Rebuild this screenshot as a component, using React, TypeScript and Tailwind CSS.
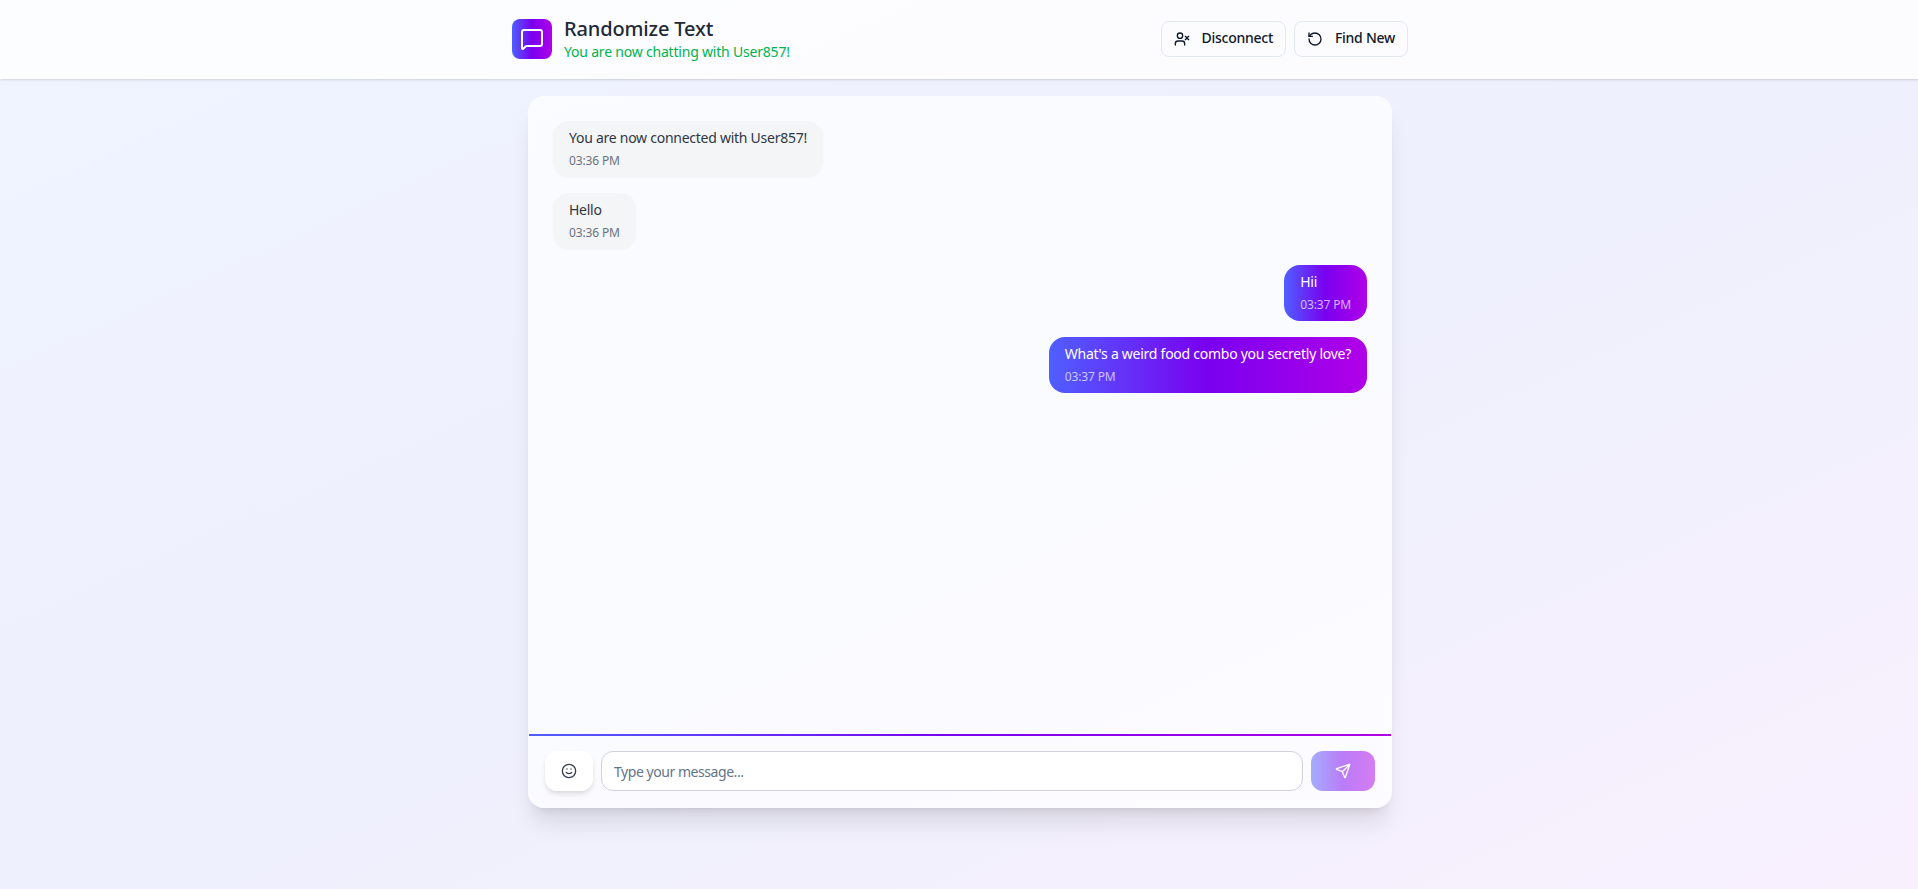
import { MessageSquare, RotateCcw, Send, Smile, UserX } from 'lucide-react'

const messages = [
  { text: 'You are now connected with User857!', time: '03:36 PM', mine: false },
  { text: 'Hello', time: '03:36 PM', mine: false },
  { text: 'Hii', time: '03:37 PM', mine: true },
  { text: "What's a weird food combo you secretly love?", time: '03:37 PM', mine: true },
]

export default function App() {
  return (
    <div className="h-[889px] overflow-hidden">
      <div className="flex h-[889px] w-[1920px] flex-col bg-gradient-to-br from-[#eff4ff] via-[#eef0fd] to-[#f9f0fe] font-['Noto_Sans',sans-serif]">
        {/* Header */}
        <header className="h-[79px] shrink-0 border-b border-white/20 bg-white/80 shadow-sm">
          <div className="mx-auto flex h-full w-[896px] items-center justify-between">
            <div className="flex items-center gap-3">
              <div className="flex h-10 w-10 items-center justify-center rounded-lg bg-[linear-gradient(to_right,#4f5fff,#7a00f0,#b000e8)]">
                <MessageSquare className="h-6 w-6 text-white" strokeWidth={2} />
              </div>
              <div>
                <h1 className="text-xl leading-7 font-medium tracking-[-0.15px] text-[#1f2937]">Randomize Text</h1>
                <p className="-translate-y-px text-sm leading-5 tracking-[-0.2px] text-[#00b34d]">You are now chatting with User857!</p>
              </div>
            </div>
            <div className="flex gap-2">
              <button className="flex h-9 items-center gap-3 rounded-lg border border-[#e2e8f0] px-3 text-sm font-medium tracking-[-0.27px] text-[#0f172a]">
                <UserX className="h-4 w-4" />
                <span className="-translate-y-px">Disconnect</span>
              </button>
              <button className="flex h-9 items-center gap-3 rounded-lg border border-[#e2e8f0] px-3 text-sm font-medium tracking-[-0.27px] text-[#0f172a]">
                <RotateCcw className="h-4 w-4" />
                <span className="-translate-y-px">Find New</span>
              </button>
            </div>
          </div>
        </header>

        {/* Chat card */}
        <main className="mx-auto mt-[17px] flex h-[712px] w-[864px] flex-col rounded-2xl border border-white/20 bg-white/70 shadow-xl">
          <div className="flex flex-1 flex-col gap-4 p-6">
            {messages.map((m, i) => (
              <div key={i} className={m.mine ? 'flex justify-end' : 'flex justify-start'}>
                <div
                  className={
                    m.mine
                      ? 'rounded-2xl bg-[linear-gradient(to_right,#4f5fff,#7a00f0,#b000e8)] px-4 py-2 text-white'
                      : 'rounded-2xl bg-[#f4f5f7] px-4 py-2 text-[#2f3746] shadow-[0_1px_2px_rgba(0,0,0,0.03)]'
                  }
                >
                  <p className="-translate-y-px text-sm leading-5 tracking-[-0.26px]">{m.text}</p>
                  <p className={m.mine ? 'mt-1 text-xs leading-4 tracking-[-0.15px] text-white/70' : 'mt-1 text-xs leading-4 tracking-[-0.15px] text-[#6b7280]'}>{m.time}</p>
                </div>
              </div>
            ))}
          </div>

          <div className="h-0.5 bg-[linear-gradient(to_right,#4f5fff,#7a00f0,#b000e8)]" />

          <div className="flex items-center gap-2 px-4 pt-[15px] pb-4">
            <button className="flex h-10 w-12 items-center justify-center rounded-xl bg-white text-[#374151] shadow-md">
              <Smile className="h-4 w-4" />
            </button>
            <input
              placeholder="Type your message..."
              className="h-10 flex-1 rounded-xl border border-[#cfd2dc] bg-white px-3 text-sm tracking-[-0.45px] placeholder:text-[#64748b]"
            />
            <button className="flex h-10 w-16 items-center justify-center rounded-xl bg-[linear-gradient(to_right,#4f5fff,#7a00f0,#b000e8)] text-white opacity-50">
              <Send className="h-4 w-4" />
            </button>
          </div>
        </main>
      </div>
    </div>
  )
}
